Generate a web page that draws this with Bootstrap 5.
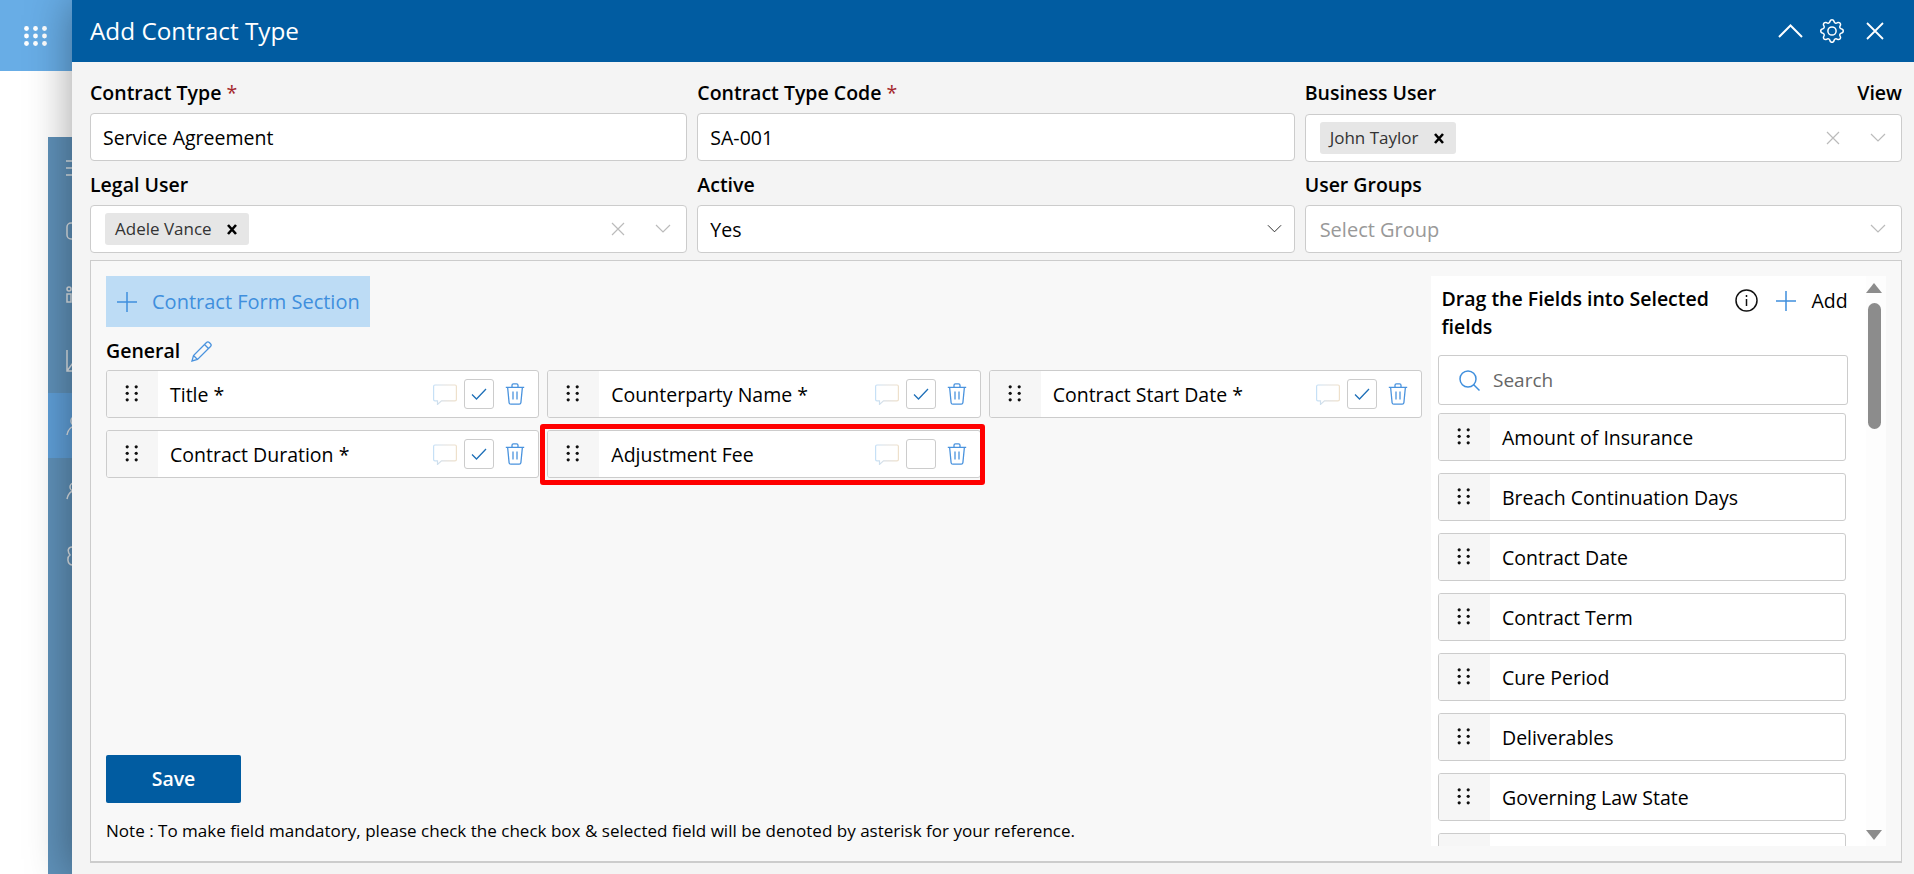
<!DOCTYPE html>
<html lang="en">
<head>
    <meta charset="UTF-8">
    <meta name="viewport" content="width=device-width, initial-scale=1.0">
    <title>Add Contract Type</title>
    <link rel="stylesheet" href="https://cdn.jsdelivr.net/npm/bootstrap@5.3.0/dist/css/bootstrap.min.css">
    <style>
        html, body { height: 100%; }
        body { font-family: "Open Sans", "Liberation Sans", sans-serif; font-size: 19.5px; color: #000; background: #fff; overflow: hidden; }
        .page-wrap { height: 874px; }
        .back-col { width: 72px; flex: none; }
        .app-tile { height: 71px; background: #68ade6; padding-right: 1px; }
        .side-bar { width: 24px; height: 737px; margin: 66px 0 0 48px; background: #5f91b9; overflow: hidden; }
        .side-item { height: 65px; color: #dde3e8; }
        .side-item:first-child { height: 61px; }
        .side-item svg { margin-left: 18px; overflow: visible; }
        .side-item.is-active { background: #5f9fd8; }
        .modal-panel { flex: 1; min-width: 0; background: #f4f4f4; box-shadow: 0 0 42px rgba(0, 0, 0, .38); position: relative; }
        .panel-head { height: 62px; background: #015ca1; color: #fff; padding: 0 30px 0 18px; }
        .panel-title { font-size: 24.3px; line-height: 1; }
        .head-tools { gap: 17px; }
        .head-close { margin-left: 5px; }
        .panel-body { padding: 17px 12px 0 18px; }
        .form-row-gap { --bs-gutter-x: 10px; --bs-gutter-y: 0; margin-bottom: 9px; }
        .field-label { font-weight: 600; line-height: 28px; margin-bottom: 6px; font-size: 19.5px; }
        .req-star { color: #a4262c; font-weight: 400; }
        .panel-body .form-control, .panel-body .form-select { height: 48px; border: 1px solid #ccc; border-radius: 4px; font-size: 19.5px; color: #000; padding: 1px 12px 0; box-shadow: none; }
        .panel-body .form-select { background-image: url("data:image/svg+xml,%3csvg xmlns='http://www.w3.org/2000/svg' viewBox='0 0 16 10'%3e%3cpath fill='none' stroke='%23222' d='M1 1l7 7 7-7'/%3e%3c/svg%3e"); background-size: 15px 10px; background-position: right 12px center; }
        .pick-box { height: 48px; background: #fff; border: 1px solid #ccc; border-radius: 4px; padding: 0 15px 0 14px; }
        .pick-box.is-shifted { margin-top: 1px; }
        .pick-chip { height: 32px; background: #e6e6e6; border-radius: 3px; padding: 0 12px 0 10px; font-size: 17px; color: #333; gap: 15px; }
        .pick-clear { color: #bbb; }
        .pick-arrow { color: #bbb; margin-left: 30px; }
        .pick-empty { color: #999; font-size: 20px; padding-top: 1px; }
        .builder-box { height: 603px; margin-top: 7px; background: #f8f8f8; border: 1px solid #ccc; border-bottom-width: 2px; padding: 15px; gap: 9px; }
        .builder-left { flex: 1; min-width: 0; }
        .add-section { width: 264px; height: 51px; background: #bddcf5; color: #3f8fdd; border: 0; border-radius: 0; font-size: 20px; padding: 1px 0 0 11px; gap: 15px; }
        .section-name { font-weight: 600; line-height: 28px; margin: 10px 0 5px; gap: 11px; }
        .field-grid { display: grid; grid-template-columns: repeat(3, 1fr); gap: 12px 8px; }
        .field-item { height: 48px; background: #fff; border: 1px solid #ccc; border-radius: 3px; overflow: hidden; }
        .field-handle { width: 51px; flex: none; align-self: stretch; background: #f6f6f6; color: #111; padding: 0 0 1px 18px; }
        .field-text { padding: 2px 0 0 12px; flex: 1; white-space: nowrap; }
        .field-tools { gap: 7px; padding-right: 13px; }
        .check-tile { width: 30px; height: 30px; background: #fff; border: 1px solid #ccc; border-radius: 3px; color: #1f70b8; }
        .save-btn { width: 135px; height: 48px; background: #015ca1; border: 0; border-radius: 2px; color: #fff; font-size: 19.5px; font-weight: 600; }
        .save-btn:hover { background: #015ca1; color: #fff; }
        .form-note { font-size: 17.05px; line-height: 24px; margin: 16px 0 3px; white-space: nowrap; }
        .palette { width: 455px; flex: none; background: #fff; overflow: hidden; }
        .palette-main { width: 435px; flex: none; padding: 9px 0 0 7px; overflow: hidden; background: #fff; }
        .palette-head { width: 420px; margin-bottom: 14px; flex: none; }
        .palette-title { width: 283px; flex: none; margin-left: 3.5px; font-weight: 600; line-height: 28px; font-size: 19.5px; }
        .palette-info { margin: 4px 0 0 10px; flex: none; }
        .palette-add { margin: 4px 0 0 18px; gap: 16px; line-height: 24px; }
        .search-box { width: 410px; height: 50px; flex: none; background: #fff; border: 1px solid #ccc; border-radius: 3px; margin-bottom: 8px; padding: 1px 0 0 20px; gap: 13px; color: #666; font-size: 19px; }
        .palette .field-item { width: 407.5px; margin-bottom: 12px; flex: none; }
        .fake-scroll { width: 20px; flex: none; background: #fdfdfd; padding-top: 7px; }
        .fake-thumb { width: 13px; height: 126px; margin: 10px 0 0 2px; background: #8c8c8c; border-radius: 7px; }
        .fake-arrow-down { margin-top: auto; margin-bottom: 6px; }
        .red-mark { position: absolute; left: 468px; top: 424px; width: 445px; height: 61px; border: 5px solid #f00; border-radius: 3px; pointer-events: none; }
    </style>
</head>
<body>
<svg width="0" height="0" class="position-absolute">
    <defs>
        <linearGradient id="bubble-line" x1="0" x2="1" y1="0" y2="0">
            <stop offset="0" stop-color="#c6e0f6"/>
            <stop offset=".5" stop-color="#dedede"/>
            <stop offset="1" stop-color="#eee0cb"/>
        </linearGradient>
    </defs>
    <symbol id="ic-dots" viewBox="0 0 12 17"><g fill="currentColor"><circle cx="1.7" cy="1.8" r="1.6"/><circle cx="10.7" cy="1.8" r="1.6"/><circle cx="1.7" cy="8.3" r="1.6"/><circle cx="10.7" cy="8.3" r="1.6"/><circle cx="1.7" cy="14.8" r="1.6"/><circle cx="10.7" cy="14.8" r="1.6"/></g></symbol>
    <symbol id="ic-bubble" viewBox="0 0 24 21"><path fill="none" stroke="url(#bubble-line)" stroke-width="1.2" d="M2 1h20a1.4 1.4 0 0 1 1.4 1.4v13a1.4 1.4 0 0 1-1.4 1.4H8.500L4.500 20.400V16.800H2A1.400 1.400 0 0 1 .6 15.400v-13A1.400 1.400 0 0 1 2 1z"/></symbol>
    <symbol id="ic-check" viewBox="0 0 16 12"><path fill="none" stroke="currentColor" stroke-width="1.300" d="M1 6.500l4.500 4.500L15 1"/></symbol>
    <symbol id="ic-trash" viewBox="0 0 20 22"><g fill="none" stroke="#4a93de" stroke-width="1.300"><path d="M.8 4.300h18.400M7 4V2.200A1.400 1.400 0 0 1 8.400 .8h3.200A1.400 1.400 0 0 1 13 2.200V4M2.600 4.300l1.500 15.400a1.700 1.700 0 0 0 1.700 1.500h8.400a1.700 1.700 0 0 0 1.700-1.500l1.500-15.400M8 8.500v8M12 8.500v8"/></g></symbol>
    <symbol id="ic-x" viewBox="0 0 14 14"><path fill="none" stroke="currentColor" stroke-width="1.200" d="M1 1l12 12M13 1L1 13"/></symbol>
    <symbol id="ic-chip-x" viewBox="0 0 10 11"><path fill="none" stroke="#000" stroke-width="2.600" d="M1 1l8 9M9 1L1 10"/></symbol>
    <symbol id="ic-down" viewBox="0 0 16 10"><path fill="none" stroke="currentColor" stroke-width="1.200" d="M1 1l7 7 7-7"/></symbol>
</svg>

<div class="page-wrap d-flex">
    <div class="back-col">
        <div class="app-tile d-flex align-items-center justify-content-center">
            <svg width="23" height="20" viewBox="0 0 23 20" fill="#fff"><circle cx="2.500" cy="2.500" r="2.400"/><circle cx="11.500" cy="2.500" r="2.400"/><circle cx="20.500" cy="2.500" r="2.400"/><circle cx="2.500" cy="10" r="2.400"/><circle cx="11.500" cy="10" r="2.400"/><circle cx="20.500" cy="10" r="2.400"/><circle cx="2.500" cy="17.500" r="2.400"/><circle cx="11.500" cy="17.500" r="2.400"/><circle cx="20.500" cy="17.500" r="2.400"/></svg>
        </div>
        <div class="side-bar">
            <div class="side-item d-flex align-items-center"><svg width="20" height="16" viewBox="0 0 20 16" fill="none" stroke="currentColor" stroke-width="1.500"><path d="M0 1h20M0 8h20M0 15h20"/></svg></div>
            <div class="side-item d-flex align-items-center"><svg width="20" height="20" viewBox="0 0 20 20" fill="none" stroke="currentColor" stroke-width="1.500"><rect x="1" y="2" width="18" height="16" rx="4"/></svg></div>
            <div class="side-item d-flex align-items-center"><svg width="20" height="20" viewBox="0 0 20 20" fill="none" stroke="currentColor" stroke-width="1.500"><rect x="1" y="8" width="4" height="8"/><circle cx="3" cy="3" r="2"/></svg></div>
            <div class="side-item d-flex align-items-center"><svg width="20" height="22" viewBox="0 0 20 22" fill="none" stroke="currentColor" stroke-width="1.500"><path d="M1 0v21h20M1 21l6-8"/></svg></div>
            <div class="side-item is-active d-flex align-items-center"><svg width="20" height="22" viewBox="0 0 20 22" fill="none" stroke="currentColor" stroke-width="1.500"><circle cx="10" cy="6" r="5"/><path d="M1 20c1-6 5-9 9-9s8 3 9 9"/></svg></div>
            <div class="side-item d-flex align-items-center"><svg width="20" height="18" viewBox="0 0 20 18" fill="none" stroke="currentColor" stroke-width="1.500"><circle cx="8" cy="5" r="4"/><path d="M1 17c1-5 4-8 7-8s6 3 7 8"/></svg></div>
            <div class="side-item d-flex align-items-center"><svg width="20" height="20" viewBox="0 0 20 20" fill="none" stroke="currentColor" stroke-width="1.500"><path d="M6 1C2 1 1 5 4 9c-3 2-3 9 2 10"/></svg></div>
        </div>
    </div>

    <div class="modal-panel">
        <div class="panel-head d-flex align-items-center justify-content-between">
            <div class="panel-title">Add Contract Type</div>
            <div class="head-tools d-flex align-items-center">
                <svg width="25" height="14" viewBox="0 0 25 14" fill="none" stroke="#fff" stroke-width="2"><path d="M1 13L12.500 1.500 24 13"/></svg>
                <svg width="24" height="24" viewBox="0 0 16 16" fill="#fff"><path d="M8 4.754a3.246 3.246 0 1 0 0 6.492 3.246 3.246 0 0 0 0-6.492zM5.754 8a2.246 2.246 0 1 1 4.492 0 2.246 2.246 0 0 1-4.492 0z"/><path d="M9.796 1.343c-.527-1.790-3.065-1.790-3.592 0l-.094.319a.873.873 0 0 1-1.255.52l-.292-.16c-1.640-.892-3.433.902-2.540 2.541l.159.292a.873.873 0 0 1-.52 1.255l-.319.094c-1.790.527-1.790 3.065 0 3.592l.319.094a.873.873 0 0 1 .52 1.255l-.16.292c-.892 1.640.901 3.434 2.541 2.540l.292-.159a.873.873 0 0 1 1.255.52l.094.319c.527 1.790 3.065 1.790 3.592 0l.094-.319a.873.873 0 0 1 1.255-.52l.292.16c1.640.893 3.434-.902 2.540-2.541l-.159-.292a.873.873 0 0 1 .52-1.255l.319-.094c1.790-.527 1.790-3.065 0-3.592l-.319-.094a.873.873 0 0 1-.52-1.255l.16-.292c.893-1.640-.902-3.433-2.541-2.540l-.292.159a.873.873 0 0 1-1.255-.52l-.094-.319zm-2.633.283c.246-.835 1.428-.835 1.674 0l.094.319a1.873 1.873 0 0 0 2.693 1.115l.291-.16c.764-.415 1.600.42 1.184 1.185l-.159.292a1.873 1.873 0 0 0 1.116 2.692l.318.094c.835.246.835 1.428 0 1.674l-.319.094a1.873 1.873 0 0 0-1.115 2.693l.16.291c.415.764-.42 1.600-1.185 1.184l-.291-.159a1.873 1.873 0 0 0-2.693 1.116l-.094.318c-.246.835-1.428.835-1.674 0l-.094-.319a1.873 1.873 0 0 0-2.692-1.115l-.292.16c-.764.415-1.600-.42-1.184-1.185l.159-.291A1.873 1.873 0 0 0 1.945 8.930l-.319-.094c-.835-.246-.835-1.428 0-1.674l.319-.094A1.873 1.873 0 0 0 3.060 4.377l-.16-.292c-.415-.764.42-1.600 1.185-1.184l.292.159a1.873 1.873 0 0 0 2.692-1.115l.094-.319z"/></svg>
                <svg class="head-close" width="18" height="18" viewBox="0 0 18 18" fill="none" stroke="#fff" stroke-width="1.800"><path d="M1 1l16 16M17 1L1 17"/></svg>
            </div>
        </div>

        <div class="panel-body">
            <div class="row form-row-gap">
                <div class="col-4">
                    <div class="field-label">Contract Type <span class="req-star">*</span></div>
                    <input type="text" class="form-control" value="Service Agreement">
                </div>
                <div class="col-4">
                    <div class="field-label">Contract Type Code <span class="req-star">*</span></div>
                    <input type="text" class="form-control" value="SA-001">
                </div>
                <div class="col-4">
                    <div class="d-flex justify-content-between">
                        <div class="field-label">Business User</div>
                        <div class="field-label">View</div>
                    </div>
                    <div class="pick-box is-shifted d-flex align-items-center">
                        <div class="pick-chip d-flex align-items-center">John Taylor <svg width="10" height="11"><use href="#ic-chip-x"/></svg></div>
                        <svg class="pick-clear ms-auto" width="14" height="14"><use href="#ic-x"/></svg>
                        <svg class="pick-arrow" width="16" height="10"><use href="#ic-down"/></svg>
                    </div>
                </div>
            </div>
            <div class="row form-row-gap mb-0">
                <div class="col-4">
                    <div class="field-label">Legal User</div>
                    <div class="pick-box d-flex align-items-center">
                        <div class="pick-chip d-flex align-items-center">Adele Vance <svg width="10" height="11"><use href="#ic-chip-x"/></svg></div>
                        <svg class="pick-clear ms-auto" width="14" height="14"><use href="#ic-x"/></svg>
                        <svg class="pick-arrow" width="16" height="10"><use href="#ic-down"/></svg>
                    </div>
                </div>
                <div class="col-4">
                    <div class="field-label">Active</div>
                    <select class="form-select"><option>Yes</option></select>
                </div>
                <div class="col-4">
                    <div class="field-label">User Groups</div>
                    <div class="pick-box d-flex align-items-center">
                        <span class="pick-empty">Select Group</span>
                        <svg class="pick-arrow ms-auto" width="16" height="10"><use href="#ic-down"/></svg>
                    </div>
                </div>
            </div>

            <div class="builder-box d-flex">
                <div class="builder-left d-flex flex-column">
                    <button type="button" class="btn add-section d-flex align-items-center">
                        <svg width="20" height="20" viewBox="0 0 20 20" fill="none" stroke="#3f8fdd" stroke-width="1.500"><path d="M10 0v20M0 10h20"/></svg>
                        Contract Form Section
                    </button>
                    <div class="section-name d-flex align-items-center">General
                        <svg width="21" height="21" viewBox="0 0 21 21" fill="none" stroke="#4a93de" stroke-width="1.300"><path d="M1 20l1.500-5.500L15.500 1.500a2 2 0 0 1 2.800 0l1.200 1.200a2 2 0 0 1 0 2.800L6.500 18.500zM2.500 14.500l4 4M13.500 3.500l4 4"/></svg>
                    </div>
                    <div class="field-grid">
                        <div class="field-item d-flex align-items-center">
                            <div class="field-handle d-flex align-items-center"><svg width="13" height="17"><use href="#ic-dots"/></svg></div>
                            <div class="field-text">Title *</div>
                            <div class="field-tools d-flex align-items-center">
                                <svg width="24" height="21"><use href="#ic-bubble"/></svg>
                                <div class="check-tile d-flex align-items-center justify-content-center"><svg width="16" height="12"><use href="#ic-check"/></svg></div>
                                <svg class="ms-1" width="20" height="22"><use href="#ic-trash"/></svg>
                            </div>
                        </div>
                        <div class="field-item d-flex align-items-center">
                            <div class="field-handle d-flex align-items-center"><svg width="13" height="17"><use href="#ic-dots"/></svg></div>
                            <div class="field-text">Counterparty Name *</div>
                            <div class="field-tools d-flex align-items-center">
                                <svg width="24" height="21"><use href="#ic-bubble"/></svg>
                                <div class="check-tile d-flex align-items-center justify-content-center"><svg width="16" height="12"><use href="#ic-check"/></svg></div>
                                <svg class="ms-1" width="20" height="22"><use href="#ic-trash"/></svg>
                            </div>
                        </div>
                        <div class="field-item d-flex align-items-center">
                            <div class="field-handle d-flex align-items-center"><svg width="13" height="17"><use href="#ic-dots"/></svg></div>
                            <div class="field-text">Contract Start Date *</div>
                            <div class="field-tools d-flex align-items-center">
                                <svg width="24" height="21"><use href="#ic-bubble"/></svg>
                                <div class="check-tile d-flex align-items-center justify-content-center"><svg width="16" height="12"><use href="#ic-check"/></svg></div>
                                <svg class="ms-1" width="20" height="22"><use href="#ic-trash"/></svg>
                            </div>
                        </div>
                        <div class="field-item d-flex align-items-center">
                            <div class="field-handle d-flex align-items-center"><svg width="13" height="17"><use href="#ic-dots"/></svg></div>
                            <div class="field-text">Contract Duration *</div>
                            <div class="field-tools d-flex align-items-center">
                                <svg width="24" height="21"><use href="#ic-bubble"/></svg>
                                <div class="check-tile d-flex align-items-center justify-content-center"><svg width="16" height="12"><use href="#ic-check"/></svg></div>
                                <svg class="ms-1" width="20" height="22"><use href="#ic-trash"/></svg>
                            </div>
                        </div>
                        <div class="field-item d-flex align-items-center">
                            <div class="field-handle d-flex align-items-center"><svg width="13" height="17"><use href="#ic-dots"/></svg></div>
                            <div class="field-text">Adjustment Fee</div>
                            <div class="field-tools d-flex align-items-center">
                                <svg width="24" height="21"><use href="#ic-bubble"/></svg>
                                <div class="check-tile"></div>
                                <svg class="ms-1" width="20" height="22"><use href="#ic-trash"/></svg>
                            </div>
                        </div>
                    </div>
                    <div class="mt-auto"><button type="button" class="btn save-btn">Save</button></div>
                    <div class="form-note">Note : To make field mandatory, please check the check box &amp; selected field will be denoted by asterisk for your reference.</div>
                </div>

                <div class="palette d-flex">
                    <div class="palette-main d-flex flex-column">
                        <div class="palette-head d-flex align-items-start">
                            <div class="palette-title">Drag the Fields into Selected fields</div>
                            <svg class="palette-info" width="23" height="23" viewBox="0 0 23 23" fill="none" stroke="#111" stroke-width="1.500"><circle cx="11.500" cy="11.500" r="10.500"/><path d="M11.500 10v7M11.500 6v2"/></svg>
                            <div class="palette-add d-flex align-items-center">
                                <svg width="20" height="20" viewBox="0 0 20 20" fill="none" stroke="#3f8fdd" stroke-width="1.500"><path d="M10 0v20M0 10h20"/></svg>
                                Add
                            </div>
                        </div>
                        <div class="search-box d-flex align-items-center">
                            <svg width="21" height="21" viewBox="0 0 21 21" fill="none" stroke="#3f8fdd" stroke-width="1.500"><circle cx="9" cy="9" r="8"/><path d="M14.500 14.500L20.500 20.500"/></svg>
                            Search
                        </div>
                        <div class="field-item d-flex align-items-center"><div class="field-handle d-flex align-items-center"><svg width="13" height="17"><use href="#ic-dots"/></svg></div><div class="field-text">Amount of Insurance</div></div>
                        <div class="field-item d-flex align-items-center"><div class="field-handle d-flex align-items-center"><svg width="13" height="17"><use href="#ic-dots"/></svg></div><div class="field-text">Breach Continuation Days</div></div>
                        <div class="field-item d-flex align-items-center"><div class="field-handle d-flex align-items-center"><svg width="13" height="17"><use href="#ic-dots"/></svg></div><div class="field-text">Contract Date</div></div>
                        <div class="field-item d-flex align-items-center"><div class="field-handle d-flex align-items-center"><svg width="13" height="17"><use href="#ic-dots"/></svg></div><div class="field-text">Contract Term</div></div>
                        <div class="field-item d-flex align-items-center"><div class="field-handle d-flex align-items-center"><svg width="13" height="17"><use href="#ic-dots"/></svg></div><div class="field-text">Cure Period</div></div>
                        <div class="field-item d-flex align-items-center"><div class="field-handle d-flex align-items-center"><svg width="13" height="17"><use href="#ic-dots"/></svg></div><div class="field-text">Deliverables</div></div>
                        <div class="field-item d-flex align-items-center"><div class="field-handle d-flex align-items-center"><svg width="13" height="17"><use href="#ic-dots"/></svg></div><div class="field-text">Governing Law State</div></div>
                        <div class="field-item d-flex align-items-center"><div class="field-handle d-flex align-items-center"></div></div>
                    </div>
                    <div class="fake-scroll d-flex flex-column">
                        <svg width="16" height="10" viewBox="0 0 16 10" fill="#8c8c8c"><path d="M8 0l8 10H0z"/></svg>
                        <div class="fake-thumb"></div>
                        <svg class="fake-arrow-down" width="16" height="10" viewBox="0 0 16 10" fill="#8c8c8c"><path d="M0 0h16L8 10z"/></svg>
                    </div>
                </div>
            </div>
        </div>
        <div class="red-mark"></div>
    </div>
</div>
<script src="https://cdn.jsdelivr.net/npm/bootstrap@5.3.0/dist/js/bootstrap.bundle.min.js"></script>
</body>
</html>
